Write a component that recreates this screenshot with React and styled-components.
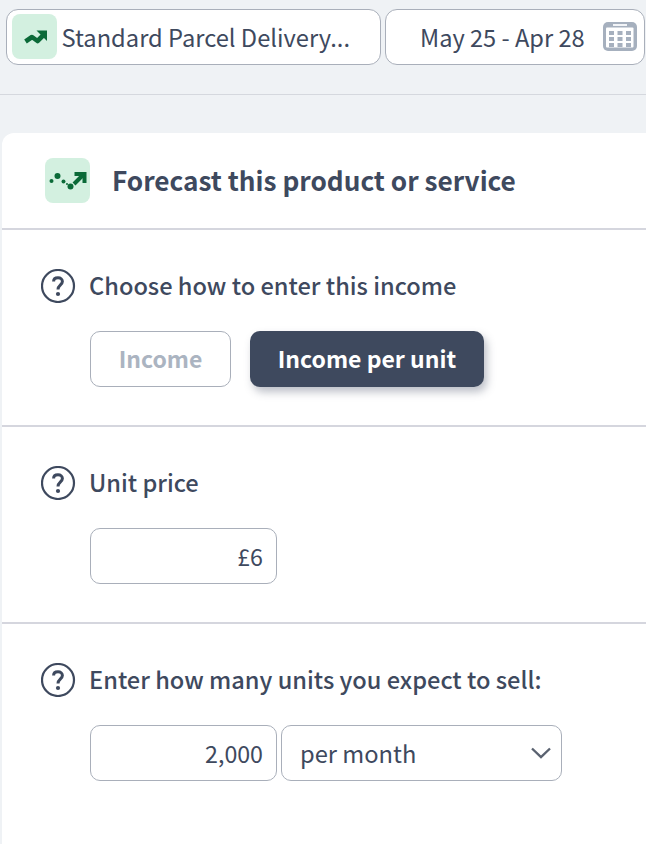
import React from 'react';
import styled, { createGlobalStyle } from 'styled-components';

const GlobalStyle = createGlobalStyle`
  html, body {
    margin: 0;
    padding: 0;
    background: #eff2f5;
  }
  body {
    font-family: "Noto Sans CJK SC", "Noto Sans", sans-serif;
    color: #3e495e;
    overflow: hidden;
  }
  * {
    box-sizing: border-box;
  }
`;

const Page = styled.div`
  width: 646px;
  height: 844px;
  overflow: hidden;
`;

const TopBar = styled.div`
  display: flex;
  gap: 4px;
  height: 95px;
  padding: 9px 1px 0 6px;
  border-bottom: 1px solid #d5d8de;
`;

const Pill = styled.div`
  display: flex;
  align-items: center;
  height: 56px;
  padding-bottom: 1px;
  background: #fff;
  border: 1px solid #a9afba;
  border-radius: 12px;
  font-size: 23.7px;
`;

const ProductPill = styled(Pill)`
  width: 375px;
  padding-left: 5px;
  gap: 4.5px;
`;

const DatePill = styled(Pill)`
  width: 260px;
  padding-left: 34px;
  padding-right: 7px;
  justify-content: space-between;
  font-size: 23.6px;
`;

const IconTile = styled.div`
  display: flex;
  align-items: center;
  justify-content: center;
  flex: none;
  width: ${(p) => p.$size}px;
  height: ${(p) => p.$size}px;
  background: #d3f0e0;
  border-radius: 8px;
`;

const Panel = styled.div`
  margin: 38px 0 0 2px;
  height: 720px;
  background: #fff;
  border-radius: 12px 0 0 0;
`;

const PanelHeader = styled.div`
  display: flex;
  align-items: center;
  gap: 22px;
  height: 97px;
  padding: 0 0 1px 43px;
  border-bottom: 2px solid #d5d6de;
`;

const Title = styled.h1`
  margin: 0;
  font-size: 26.2px;
  font-weight: 600;
  line-height: 36px;
  color: #3e495e;
`;

const Section = styled.section`
  height: 197px;
  padding: 38px 0 0 39px;
  border-bottom: 2px solid ${(p) => (p.$last ? 'transparent' : '#d5d6de')};
`;

const LabelRow = styled.div`
  display: flex;
  align-items: center;
  gap: 15px;
  height: 36px;
  font-size: 23.6px;
  font-weight: 500;
`;

const LabelText = styled.span`
  margin: 0 0 2px -2px;
`;

const Controls = styled.div`
  display: flex;
  gap: ${(p) => p.$gap || 4}px;
  margin: 27px 0 0 49px;
`;

const ChoiceButton = styled.button`
  height: 56px;
  width: ${(p) => p.$width}px;
  padding: 0 0 2px;
  font-family: inherit;
  font-size: 23px;
  font-weight: 600;
  border-radius: 10px;
  color: ${(p) => (p.$active ? '#fff' : '#abb4c1')};
  background: ${(p) => (p.$active ? '#3e495e' : '#fff')};
  border: ${(p) => (p.$active ? 'none' : '1px solid #a9afba')};
  box-shadow: ${(p) => (p.$active ? '3px 5px 9px rgba(62, 73, 94, 0.35)' : 'none')};
`;

const Field = styled.div`
  display: flex;
  align-items: center;
  justify-content: flex-end;
  width: 187px;
  height: 56px;
  padding-right: 13px;
  font-size: 23.2px;
  background: #fff;
  border: 1px solid #a9afba;
  border-radius: 10px;
`;

const Select = styled.div`
  display: flex;
  align-items: center;
  justify-content: space-between;
  width: 281px;
  height: 56px;
  padding: 0 9px 0 18px;
  font-size: 23.7px;
  background: #fff;
  border: 1px solid #a9afba;
  border-radius: 10px;
`;

const TrendIcon = () => (
  <svg width="24" height="14" viewBox="-1 0 24 14" fill="none">
    <path d="M1.5 11.5 L8 7 L13.5 11 L20 4.5" stroke="#0b6a38" strokeWidth="4.6" strokeLinejoin="round" />
    <path d="M12.5 0.5 H23 V11 Z" fill="#0b6a38" />
  </svg>
);

const ForecastIcon = () => (
  <svg width="38" height="20" viewBox="0 0 38 20" fill="none">
    <circle cx="2.5" cy="11" r="2" fill="#0b6a38" />
    <circle cx="8.5" cy="6" r="3" fill="#0b6a38" />
    <circle cx="14.5" cy="11.5" r="2" fill="#0b6a38" />
    <circle cx="18" cy="14" r="1" fill="#0b6a38" />
    <circle cx="21.5" cy="16.5" r="3" fill="#0b6a38" />
    <path d="M25 14 L34 5" stroke="#0b6a38" strokeWidth="4" />
    <path d="M25.5 2 H37.5 V13 H33.5 V6 H25.5 Z" fill="#0b6a38" />
  </svg>
);

const CalendarIcon = () => (
  <svg width="34" height="29" viewBox="0 0 34 29">
    <rect x="0" y="0" width="34" height="29" rx="5" fill="#a6b0be" />
    <rect x="10" y="2" width="14" height="2" fill="#f2f4f7" />
    <rect x="3" y="5.5" width="27.5" height="20" rx="1" fill="#fff" />
    {[9, 15, 21].map((y) =>
      [8.5, 17, 25.5].map((x) => (
        <rect key={`${x}-${y}`} x={x - 2.5} y={y} width="5" height="4" fill="#a6b0be" />
      ))
    )}
  </svg>
);

const HelpIcon = () => (
  <svg width="35" height="34" viewBox="0 0 35 34" fill="none">
    <circle cx="17" cy="17" r="16" stroke="#3e495e" strokeWidth="2.2" />
    <path
      d="M12.6 12.5 C12.6 10 14.6 8.8 17 8.8 C19.6 8.8 21.4 10.3 21.4 12.5 C21.4 15.8 17 16 17 20.5"
      stroke="#3e495e"
      strokeWidth="3"
    />
    <circle cx="17" cy="25" r="2.1" fill="#3e495e" />
  </svg>
);

const ChevronIcon = () => (
  <svg width="22" height="14" viewBox="0 0 22 14" fill="none">
    <path d="M2 2.5 L11 11 L20 2.5" stroke="#5a6270" strokeWidth="2.4" />
  </svg>
);

const App = () => {
  return (
    <Page>
      <GlobalStyle />
      <TopBar>
        <ProductPill>
          <IconTile $size={45}>
            <TrendIcon />
          </IconTile>
          Standard Parcel Delivery...
        </ProductPill>
        <DatePill>
          May 25 - Apr 28
          <CalendarIcon />
        </DatePill>
      </TopBar>
      <Panel>
        <PanelHeader>
          <IconTile $size={45}>
            <ForecastIcon />
          </IconTile>
          <Title>Forecast this product or service</Title>
        </PanelHeader>
        <Section>
          <LabelRow>
            <HelpIcon />
            <LabelText>Choose how to enter this income</LabelText>
          </LabelRow>
          <Controls $gap={19}>
            <ChoiceButton $width={141}>Income</ChoiceButton>
            <ChoiceButton $width={234} $active>
              Income per unit
            </ChoiceButton>
          </Controls>
        </Section>
        <Section>
          <LabelRow>
            <HelpIcon />
            <LabelText>Unit price</LabelText>
          </LabelRow>
          <Controls>
            <Field>£6</Field>
          </Controls>
        </Section>
        <Section $last>
          <LabelRow>
            <HelpIcon />
            <LabelText>Enter how many units you expect to sell:</LabelText>
          </LabelRow>
          <Controls>
            <Field>2,000</Field>
            <Select>
              per month
              <ChevronIcon />
            </Select>
          </Controls>
        </Section>
      </Panel>
    </Page>
  );
};

export default App;
